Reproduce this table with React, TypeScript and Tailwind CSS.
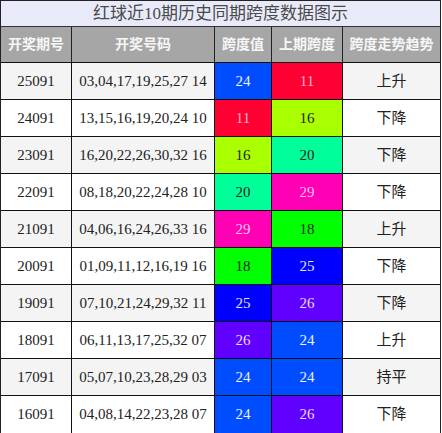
import React from "react";

type Row = { q: string; nums: string; v: number; p: number; t: string };

const rows: Row[] = [
  { q: "25091", nums: "03,04,17,19,25,27 14", v: 24, p: 11, t: "上升" },
  { q: "24091", nums: "13,15,16,19,20,24 10", v: 11, p: 16, t: "下降" },
  { q: "23091", nums: "16,20,22,26,30,32 16", v: 16, p: 20, t: "下降" },
  { q: "22091", nums: "08,18,20,22,24,28 10", v: 20, p: 29, t: "下降" },
  { q: "21091", nums: "04,06,16,24,26,33 16", v: 29, p: 18, t: "上升" },
  { q: "20091", nums: "01,09,11,12,16,19 16", v: 18, p: 25, t: "下降" },
  { q: "19091", nums: "07,10,21,24,29,32 11", v: 25, p: 26, t: "下降" },
  { q: "18091", nums: "06,11,13,17,25,32 07", v: 26, p: 24, t: "上升" },
  { q: "17091", nums: "05,07,10,23,28,29 03", v: 24, p: 24, t: "持平" },
  { q: "16091", nums: "04,08,14,22,23,28 07", v: 24, p: 26, t: "下降" },
];

const colorCls: Record<number, string> = {
  24: "bg-[#004cff] text-[#eef2ff]",
  11: "bg-[#ff0033] text-[#ffb8c4]",
  16: "bg-[#aaff00] text-[#222222]",
  20: "bg-[#00ff99] text-[#222222]",
  29: "bg-[#ff00b4] text-[#ffc4ec]",
  18: "bg-[#00ff00] text-[#222222]",
  25: "bg-[#0000ff] text-[#e4e4ff]",
  26: "bg-[#6000ff] text-[#e8ddff]",
};

const font = "font-['Liberation_Serif','Noto_Sans_CJK_SC',serif]";

export default function App() {
  return (
    <div className={`w-[441px] border border-[#222] ${font} bg-white`}>
      <div className="h-[26px] border-b border-[#333] bg-[#e8eafa] text-[#4a4a4a] text-[17px] leading-[25px] text-center">
        红球近10期历史同期跨度数据图示
      </div>
      <div className="flex h-[36px] border-b border-[#111] bg-[#a6a6a6] text-[#f6f6f6] text-[14px] font-bold">
        <div className="w-[71px] border-r border-[#222] flex items-center justify-center">开奖期号</div>
        <div className="w-[143px] border-r border-[#222] flex items-center justify-center">开奖号码</div>
        <div className="w-[57px] border-r border-[#222] flex items-center justify-center">跨度值</div>
        <div className="w-[71px] border-r border-[#222] flex items-center justify-center">上期跨度</div>
        <div className="flex-1 flex items-center justify-center">跨度走势趋势</div>
      </div>
      {rows.map((r, i) => (
        <div
          key={r.q}
          className={`flex h-[37px] ${i < rows.length - 1 ? "border-b" : ""} border-[#111] text-[15px] text-[#222] ${i % 2 === 0 ? "bg-[#f4f4f4]" : "bg-white"}`}
        >
          <div className="w-[71px] border-r border-[#111] flex items-center justify-center">{r.q}</div>
          <div className="w-[143px] border-r border-[#111] flex items-center justify-center">{r.nums}</div>
          <div className={`w-[57px] border-r border-[#111] flex items-center justify-center ${colorCls[r.v]}`}>{r.v}</div>
          <div className={`w-[71px] border-r border-[#111] flex items-center justify-center ${colorCls[r.p]}`}>{r.p}</div>
          <div className="flex-1 flex items-center justify-center text-[15px]">{r.t}</div>
        </div>
      ))}
    </div>
  );
}
